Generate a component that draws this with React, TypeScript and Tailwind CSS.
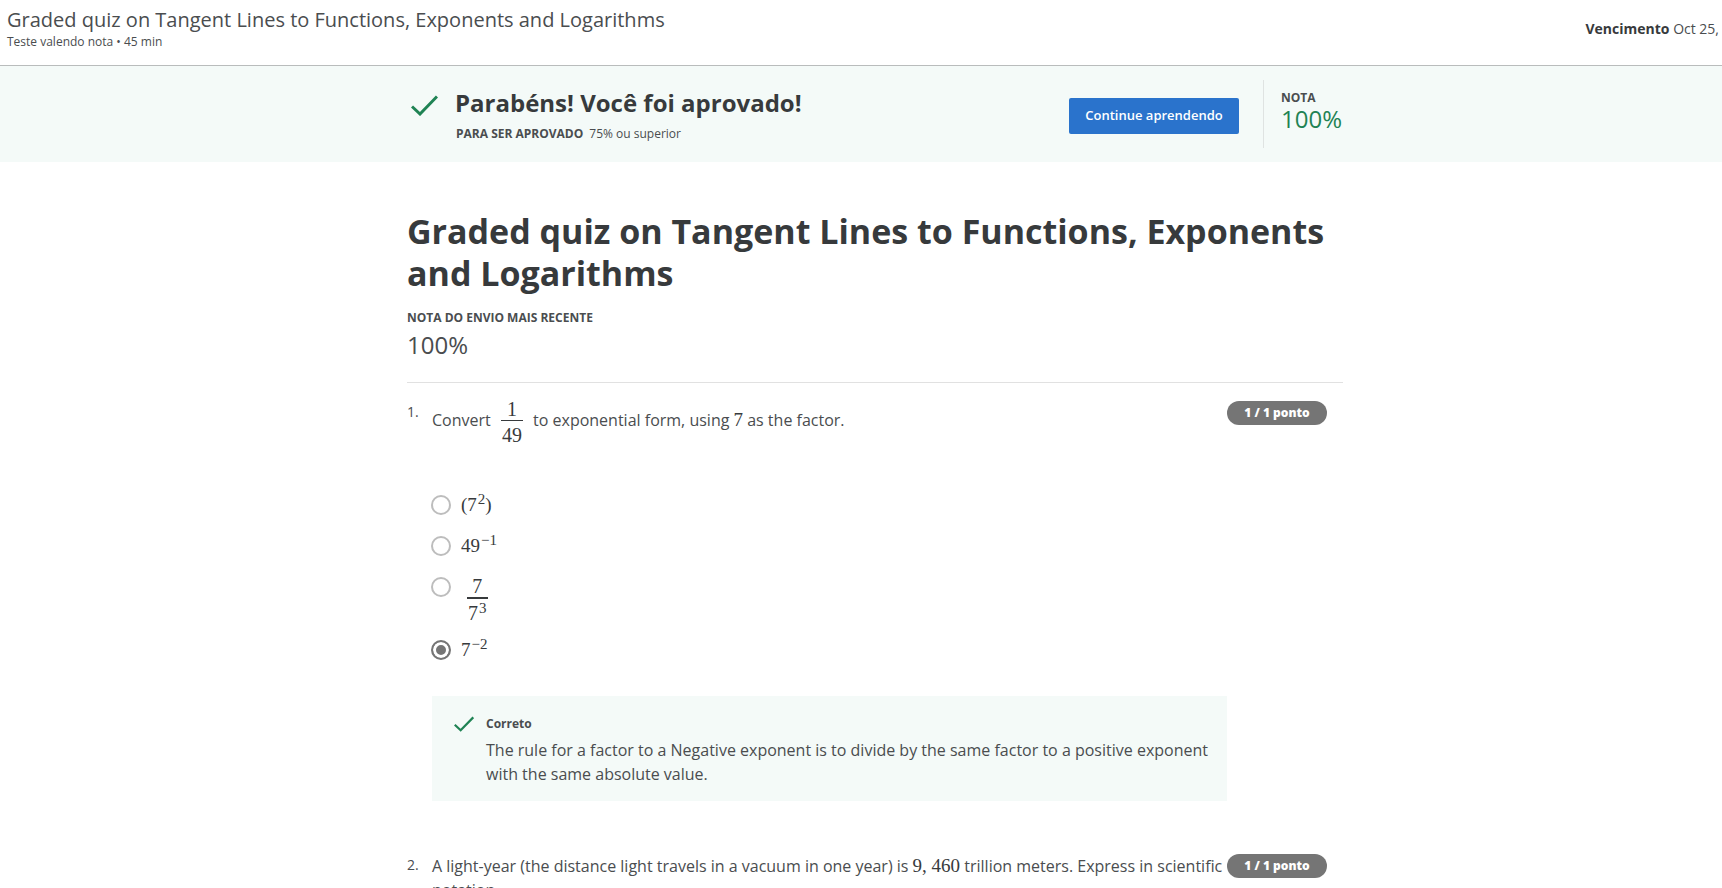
import type { ReactNode } from "react";

function Check({ className }: { className: string }) {
  return (
    <svg viewBox="0 0 27 21" className={className} fill="none" stroke="#1f8354" strokeWidth="3" aria-hidden="true">
      <path d="M1 11.5 L9 19 L26 1.5" />
    </svg>
  );
}

function Num({ children }: { children: ReactNode }) {
  return (
    <span className="font-['Liberation_Serif',serif] text-[19px] leading-6 font-normal text-[#373a3c]">{children}</span>
  );
}

function Sup({ children }: { children: ReactNode }) {
  return <sup className="ml-px text-[15px] leading-none">{children}</sup>;
}

function Fraction({ top, bottom, thick = false }: { top: ReactNode; bottom: ReactNode; thick?: boolean }) {
  return (
    <span className="mx-1.5 -my-[3px] inline-flex flex-col items-stretch text-center align-middle font-['Liberation_Serif',serif] text-[20px] leading-[22px] font-normal text-[#373a3c]">
      <span className="px-px">{top}</span>
      <span className={thick ? "border-t-2 border-[#373a3c] px-px pt-[3px]" : "border-t border-[#373a3c] px-px pt-[3px]"}>
        {bottom}
      </span>
    </span>
  );
}

function Question({ number, prompt, children }: { number: number; prompt: ReactNode; children?: ReactNode }) {
  return (
    <section>
      <div className="flex items-start pr-4">
        <span className="w-[25px] shrink-0 text-[14px] leading-[22px]">{number}.</span>
        <div className="min-w-0 flex-1 text-[16px] leading-6">{prompt}</div>
        <span className="w-[100px] shrink-0 rounded-full bg-[#757575] text-center text-[12px] leading-6 font-extrabold text-white">
          1 / 1 ponto
        </span>
      </div>
      {children}
    </section>
  );
}

function Option({ id, checked = false, tall = false, children }: { id: string; checked?: boolean; tall?: boolean; children: ReactNode }) {
  return (
    <div className="flex items-start">
      <input
        type="radio"
        id={id}
        name="question-1"
        defaultChecked={checked}
        className="mt-0.5 size-5 shrink-0 appearance-none rounded-full border-2 border-[#bdbdbd] checked:border-[#757575] checked:bg-[#757575] checked:shadow-[inset_0_0_0_3px_#fff]"
      />
      <label htmlFor={id} className={tall ? "pl-[10px] leading-[46px]" : "pl-[10px] leading-6"}>
        {children}
      </label>
    </div>
  );
}

export default function App() {
  return (
    <div className="bg-white font-['Open_Sans',sans-serif] text-[#4a4d4f]">
      <header className="flex items-start justify-between border-b border-[#b9bcbc] pt-2 pr-[3px] pb-[14px] pl-[7px]">
        <div>
          <p className="text-[20px] leading-6">
            Graded quiz on Tangent Lines to Functions, Exponents and Logarithms
          </p>
          <p className="mt-px text-[12px] leading-[18px]">Teste valendo nota • 45 min</p>
        </div>
        <p className="pt-[10px] text-[14px] leading-[22px]">
          <strong className="font-bold text-[#373a3c]">Vencimento</strong> Oct 25,
        </p>
      </header>

      <section className="bg-[#f4faf8]">
        <div className="mx-auto flex max-w-[964px] items-start py-[14px] pl-7">
          <Check className="mt-[15px] ml-1 h-[21px] w-[27px]" />
          <div className="ml-[17px] flex-1 pt-[6px]">
            <h2 className="text-[24px] leading-[34px] font-bold text-[#373a3c]">Parabéns! Você foi aprovado!</h2>
            <p className="mt-[5px] ml-px text-[12px] leading-[18px]">
              <strong className="mr-1.5 font-bold">PARA SER APROVADO</strong>75% ou superior
            </p>
          </div>
          <button type="button" className="mt-[18px] h-9 w-[170px] rounded-[2px] bg-[#2a73cc] text-[13px] font-semibold text-white">
            Continue aprendendo
          </button>
          <div className="ml-6 h-[68px] w-20 border-l border-[#dfe3e2] pt-[9px] pl-[17px]">
            <p className="text-[12px] leading-[18px] font-bold">NOTA</p>
            <p className="text-[24px] leading-6 text-[#1f8354]">100%</p>
          </div>
        </div>
      </section>

      <main className="mx-auto max-w-[964px] pt-12 pl-7">
        <h1 className="text-[34px] leading-[42px] font-bold text-[#373a3c]">
          Graded quiz on Tangent Lines to Functions, Exponents and Logarithms
        </h1>
        <p className="mt-[15px] text-[12px] leading-[18px] font-bold">NOTA DO ENVIO MAIS RECENTE</p>
        <p className="mt-0.5 mb-[21px] text-[24px] leading-8">100%</p>
        <hr className="mb-[18px] border-t border-[#e1e1e1]" />

        <Question
          number={1}
          prompt={
            <p>
              Convert <Fraction top="1" bottom="49" /> to exponential form, using <Num>7</Num> as the factor.
            </p>
          }
        >
          <fieldset className="mt-[50px] ml-6 flex flex-col gap-[17px]">
            <legend className="sr-only">1.</legend>
            <Option id="q1-a">
              <Num>(7<Sup>2</Sup>)</Num>
            </Option>
            <Option id="q1-b">
              <Num>49<Sup>−1</Sup></Num>
            </Option>
            <Option id="q1-c" tall>
              <Fraction thick top="7" bottom={<>7<Sup>3</Sup></>} />
            </Option>
            <Option id="q1-d" checked>
              <Num>7<Sup>−2</Sup></Num>
            </Option>
          </fieldset>
          <div className="mt-[34px] mr-[116px] ml-[25px] flex items-start bg-[#f4faf8] pt-4 pr-4 pb-[15px] pl-[22px]">
            <Check className="mt-1 h-4 w-5" />
            <div className="ml-3 flex-1">
              <p className="text-[12px] leading-6 font-bold">Correto</p>
              <p className="mt-0.5 text-[16px] leading-6">
                The rule for a factor to a Negative exponent is to divide by the same factor to a positive exponent with
                the same absolute value.
              </p>
            </div>
          </div>
        </Question>

        <div className="mt-[53px]">
          <Question
            number={2}
            prompt={
              <p>
                A light-year (the distance light travels in a vacuum in one year) is <Num>9, 460</Num> trillion meters.
                Express in scientific notation.
              </p>
            }
          />
        </div>
      </main>
    </div>
  );
}
